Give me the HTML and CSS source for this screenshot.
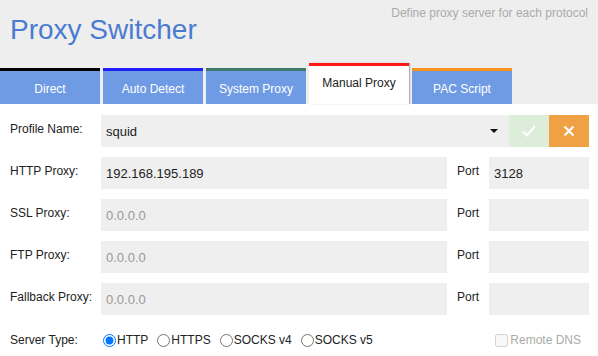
FILE: index.html
```html
<!DOCTYPE html>
<html lang="en">
<head>
    <meta charset="UTF-8">
    <meta name="viewport" content="width=device-width, initial-scale=1.0">
    <title>Proxy Switcher</title>
    <link rel="stylesheet" href="styles.css">
</head>
<body>
    <div class="header">
        <div class="header-top">
            <h1>Proxy Switcher</h1>
            <div class="subtitle">Define proxy server for each protocol</div>
        </div>

        <div class="tabs">
            <div class="tab tab-direct">Direct</div>
            <div class="tab tab-auto">Auto Detect</div>
            <div class="tab tab-system">System Proxy</div>
            <div class="tab tab-manual active">Manual Proxy</div>
            <div class="tab tab-pac">PAC Script</div>
        </div>
    </div>

    <form class="proxy-form">
        <div class="form-row">
            <label class="row-label">Profile Name:</label>
            <div class="select-box">
                <select class="field">
                    <option>squid</option>
                </select>
                <span class="caret"></span>
            </div>
            <button type="button" class="btn btn-ok">
                <svg width="16" height="14" viewBox="0 0 16 14"><path d="M2 7.5l4 4 8-9.5" fill="none" stroke="#fff" stroke-width="2"/></svg>
            </button>
            <button type="button" class="btn btn-cancel">
                <svg width="12" height="12" viewBox="0 0 12 12"><path d="M1.5 1.5l9 9M10.5 1.5l-9 9" stroke="#fff" stroke-width="2.2"/></svg>
            </button>
        </div>

        <div class="form-row">
            <label class="row-label">HTTP Proxy:</label>
            <input type="text" class="field" value="192.168.195.189" placeholder="0.0.0.0">
            <label class="port-label">Port</label>
            <input type="text" class="field port" value="3128">
        </div>

        <div class="form-row">
            <label class="row-label">SSL Proxy:</label>
            <input type="text" class="field" placeholder="0.0.0.0">
            <label class="port-label">Port</label>
            <input type="text" class="field port">
        </div>

        <div class="form-row">
            <label class="row-label">FTP Proxy:</label>
            <input type="text" class="field" placeholder="0.0.0.0">
            <label class="port-label">Port</label>
            <input type="text" class="field port">
        </div>

        <div class="form-row">
            <label class="row-label">Fallback Proxy:</label>
            <input type="text" class="field" placeholder="0.0.0.0">
            <label class="port-label">Port</label>
            <input type="text" class="field port">
        </div>

        <div class="form-row type-row">
            <label class="row-label">Server Type:</label>
            <div class="radio-group">
                <label><input type="radio" name="type" checked>HTTP</label>
                <label><input type="radio" name="type">HTTPS</label>
                <label><input type="radio" name="type">SOCKS v4</label>
                <label><input type="radio" name="type">SOCKS v5</label>
            </div>
            <label class="remote-dns"><input type="checkbox" disabled>Remote DNS</label>
        </div>
    </form>
</body>
</html>
```

FILE: styles.css
```css
* {
    margin: 0;
    padding: 0;
    box-sizing: border-box;
    font-family: 'Liberation Sans', Arial, sans-serif;
}

body {
    background: #fff;
    color: #222;
    font-size: 12px;
}

.header {
    background-color: #eeeeee;
    height: 104px;
    display: flex;
    flex-direction: column;
}

.header-top {
    flex: 1;
    display: flex;
    justify-content: space-between;
    align-items: flex-start;
    padding: 0 10px 0 10px;
}

.header-top h1 {
    color: #4b7bd1;
    font-size: 28px;
    font-weight: normal;
    margin-top: 14px;
}

.subtitle {
    color: #aaa;
    font-size: 12px;
    margin-top: 6px;
}

.tabs {
    display: flex;
    align-items: flex-end;
    gap: 3px;
}

.tab {
    width: 100px;
    height: 36px;
    padding-top: 3px;
    background-color: #6f9be4;
    border-top: 3px solid #000;
    color: #fff;
    font-size: 12px;
    display: flex;
    align-items: center;
    justify-content: center;
}

.tab-auto { border-top-color: #2020ff; }
.tab-system { border-top-color: #3f7a6b; }
.tab-pac { border-top-color: #f7921e; }

.tab.active {
    height: 41px;
    padding-top: 0;
    padding-bottom: 4px;
    background-color: #fff;
    border-top-color: #ff1a1a;
    color: #222;
    box-shadow: 1px 0 1px rgba(0, 0, 0, 0.25);
}

.proxy-form {
    padding: 11px 9px 0 10px;
    display: flex;
    flex-direction: column;
    gap: 10px;
}

.form-row {
    display: flex;
    align-items: center;
    height: 32px;
}

.row-label {
    width: 91px;
    padding-bottom: 4px;
    font-size: 12px;
}

.field {
    flex: 1;
    height: 32px;
    border: none;
    outline: none;
    background-color: #efefef;
    padding: 0 5px;
    font-size: 13px;
    color: #222;
}

.field::placeholder {
    color: #999;
}

.port-label {
    width: 42px;
    padding-left: 10px;
    padding-bottom: 4px;
}

.field.port {
    flex: none;
    width: 100px;
}

.select-box {
    flex: 1;
    position: relative;
    display: flex;
}

.select-box select {
    appearance: none;
    width: 100%;
}

.caret {
    position: absolute;
    right: 11px;
    top: 14px;
    border-left: 4px solid transparent;
    border-right: 4px solid transparent;
    border-top: 4px solid #111;
}

.btn {
    width: 40px;
    height: 32px;
    border: none;
    display: flex;
    align-items: center;
    justify-content: center;
}

.btn-ok { background-color: #dcedd9; }
.btn-cancel { background-color: #f0a143; }

.type-row {
    height: 24px;
    margin-top: 3px;
}

.type-row .row-label {
    padding-bottom: 0;
}

.radio-group {
    display: flex;
    gap: 8px;
    padding-left: 1px;
}

.radio-group label,
.remote-dns {
    display: flex;
    align-items: center;
}

.radio-group input {
    margin: 0 1px 0 1px;
}

.remote-dns {
    margin-left: auto;
    margin-right: 8px;
    color: #aaa;
}

.remote-dns input {
    margin: 0 2px 0 0;
}
```
